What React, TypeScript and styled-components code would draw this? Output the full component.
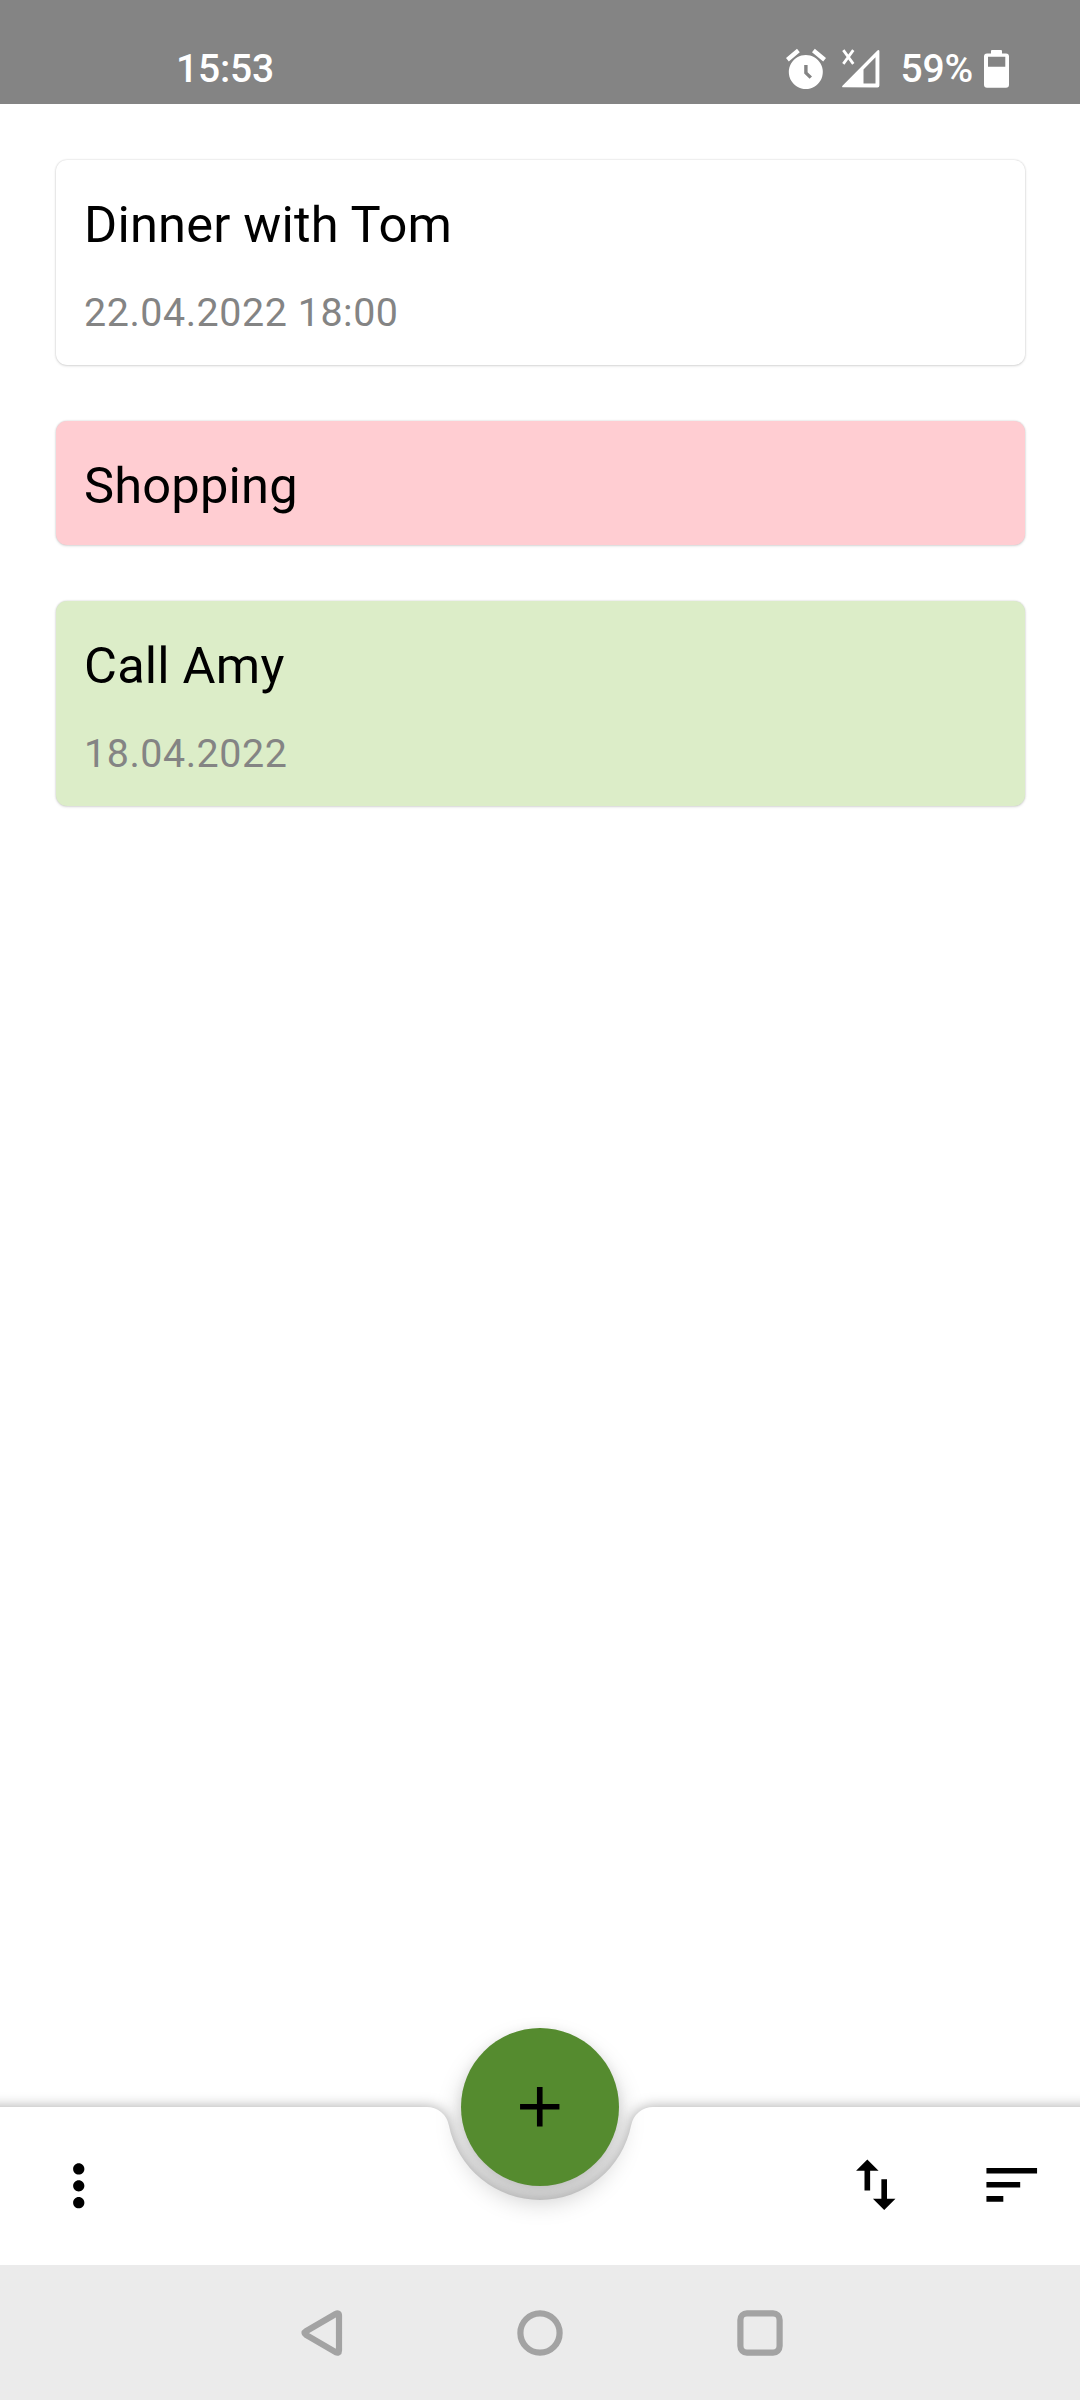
import React from "react";
import styled, { createGlobalStyle } from "styled-components";

const GlobalStyle = createGlobalStyle`
  *, *::before, *::after { box-sizing: border-box; }
  body { margin: 0; background: #fff; font-family: Roboto, sans-serif; }
`;

const Screen = styled.div`
  display: flex;
  flex-direction: column;
  width: 1080px;
  height: 2400px;
  overflow: hidden;
  background: #fff;
`;

const StatusBar = styled.header`
  display: flex;
  flex: none;
  justify-content: space-between;
  height: 104px;
  padding: 45px 70px 0 176px;
  background: #848484;
  color: #fff;
`;

const StatusText = styled.span`
  font-size: 39px;
  font-weight: 500;
  line-height: 48px;
  letter-spacing: -0.2px;
  white-space: nowrap;
`;

const StatusIcons = styled.div`
  display: flex;
  align-items: flex-start;
`;

const Icon = styled.svg`
  display: block;
  flex: none;
`;

const StatusGlyphs = styled(Icon)`
  margin-right: 20px;
`;

const Battery = styled(Icon)`
  margin-left: 11px;
`;

const TaskList = styled.main`
  display: flex;
  flex: 1;
  flex-direction: column;
  gap: 56px;
  padding: 56px 55px 0 56px;
`;

const TaskCard = styled.article<{ $tone: string }>`
  padding: 35px 28px 29.4px;
  border-radius: 11px;
  background: ${(p) => p.$tone};
  box-shadow: 0 0 2px rgba(0, 0, 0, 0.18), 0 1px 3px rgba(0, 0, 0, 0.12);
`;

const TaskTitle = styled.h2`
  margin: 0;
  color: #000;
  font-size: 50.6px;
  font-weight: 400;
  line-height: 59px;
  letter-spacing: 0.2px;
`;

const TaskDate = styled.p`
  margin: 36px 0 0;
  color: #848484;
  font-size: 39.4px;
  line-height: 46px;
  letter-spacing: 0.55px;
`;

const BottomBar = styled.footer`
  position: relative;
  flex: none;
  height: 158px;
`;

const BarShadow = styled.div`
  position: absolute;
  inset: 0 -40px;
  filter: drop-shadow(0 0 7px rgba(0, 0, 0, 0.34));
`;

const BarSurface = styled.div`
  height: 100%;
  background: #fff;
  clip-path: path("M0 0H466.7A22.5 22.5 0 0 1 488.8 18.1A93 93 0 0 0 671.2 18.1A22.5 22.5 0 0 1 693.3 0H1160V158H0Z");
`;

const BarActions = styled.div`
  position: relative;
  display: flex;
  align-items: center;
  height: 100%;
  padding: 0 35px 0 45px;
`;

const IconButton = styled.button<{ $lift?: number }>`
  display: flex;
  margin: 0 0 ${(p) => p.$lift ?? 0}px;
  padding: 0;
  border: 0;
  background: none;
  color: #000;

  & + & {
    margin-left: 68px;
  }
`;

const Spacer = styled.div`
  flex: 1;
`;

const AddButton = styled.button`
  position: absolute;
  top: -79px;
  left: 461px;
  display: grid;
  place-items: center;
  width: 158px;
  height: 158px;
  padding: 0;
  border: 0;
  border-radius: 50%;
  background: #558b2f;
  color: #000;
  box-shadow: 0 14px 26px rgba(0, 0, 0, 0.22), 0 2px 12px rgba(0, 0, 0, 0.07);
`;

const SystemNav = styled.nav`
  position: relative;
  display: flex;
  flex: none;
  align-items: center;
  justify-content: center;
  gap: 172px;
  height: 135px;
  background: #ebebeb;
`;

const tasks = [
  { title: "Dinner with Tom", date: "22.04.2022 18:00", tone: "#fff" },
  { title: "Shopping", tone: "#ffcdd2" },
  { title: "Call Amy", date: "18.04.2022", tone: "#dcedc8" },
];

function ActionIcon({ d }: { d: string }) {
  return (
    <Icon width="67.5" height="67.5" viewBox="0 0 24 24" fill="currentColor">
      <path d={d} />
    </Icon>
  );
}

export default function App() {
  return (
    <>
      <GlobalStyle />
      <Screen>
        <StatusBar>
          <StatusText>15:53</StatusText>
          <StatusIcons>
            <StatusGlyphs width="96" height="46" viewBox="785 45 96 46" fill="#fff">
              <path d="M786 58 797 48.8 799.8 52.2 788.8 61.4ZM812 52.2 814.8 48.8 826 58 823.2 61.4Z" />
              <path
                fillRule="evenodd"
                d="M805.8 55a17 17 0 1 0 0.01 0ZM804.2 65H807.6V72.3L812 76.4 809.6 78.8 804.2 73.6Z"
              />
              <path
                fillRule="evenodd"
                d="M842.5 87.3Q841.5 87 842.5 85.8L877.4 50.4Q879.2 49.2 879.4 51.2V85.6Q879.4 87.5 877.5 87.5ZM863.5 69.5V83.5H875.5V57.3Z"
              />
              <path d="M843.3 50.2 853.3 63.8M853.3 50.2 843.3 63.8" stroke="#fff" strokeWidth="2.8" />
            </StatusGlyphs>
            <StatusText>59%</StatusText>
            <Battery width="26" height="46" viewBox="984 45 26 46" fill="#fff">
              <path
                fillRule="evenodd"
                d="M992 50H1001Q1002 50 1002 51V53.5H1006Q1009 53.5 1009 56.5V84.7Q1009 87.7 1006 87.7H987Q984 87.7 984 84.7V56.5Q984 53.5 987 53.5H991V51Q991 50 992 50ZM988 56.8V66.8H1005.3V56.8Z"
              />
            </Battery>
          </StatusIcons>
        </StatusBar>

        <TaskList>
          {tasks.map((task) => (
            <TaskCard key={task.title} $tone={task.tone}>
              <TaskTitle>{task.title}</TaskTitle>
              {task.date && <TaskDate>{task.date}</TaskDate>}
            </TaskCard>
          ))}
        </TaskList>

        <BottomBar>
          <BarShadow>
            <BarSurface />
          </BarShadow>
          <BarActions>
            <IconButton aria-label="More">
              <ActionIcon d="M12 8c1.1 0 2-.9 2-2s-.9-2-2-2-2 .9-2 2 .9 2 2 2zm0 2c-1.1 0-2 .9-2 2s.9 2 2 2 2-.9 2-2-.9-2-2-2zm0 6c-1.1 0-2 .9-2 2s.9 2 2 2 2-.9 2-2-.9-2-2-2z" />
            </IconButton>
            <Spacer />
            <IconButton aria-label="Swap order" $lift={2}>
              <ActionIcon d="M16 17.01V10h-2v7.01h-3L15 21l4-3.99h-3zM9 3L5 6.99h3V14h2V6.99h3L9 3z" />
            </IconButton>
            <IconButton aria-label="Sort" $lift={2}>
              <ActionIcon d="M3 18h6v-2H3v2zM3 6v2h18V6H3zm0 7h12v-2H3v2z" />
            </IconButton>
          </BarActions>
          <AddButton aria-label="Add">
            <ActionIcon d="M19 13h-6v6h-2v-6H5v-2h6V5h2v6h6v2z" />
          </AddButton>
        </BottomBar>

        <SystemNav>
          <Icon width="48" height="48" viewBox="0 0 48 48" fill="none" stroke="#a3a3a3" strokeWidth="6.2" strokeLinejoin="round">
            <path d="M39.6 5 10 22.2Q7 24 10 25.8L39.6 43.2Q43 44.8 43 41.4V6.6Q43 3.2 39.6 5Z" />
          </Icon>
          <Icon width="48" height="48" viewBox="0 0 48 48" fill="none" stroke="#a3a3a3" strokeWidth="6.2">
            <circle cx="24" cy="24" r="19.6" />
          </Icon>
          <Icon width="48" height="48" viewBox="0 0 48 48" fill="none" stroke="#a3a3a3" strokeWidth="6.2">
            <rect x="4.4" y="4.4" width="39.2" height="39.2" rx="6.5" />
          </Icon>
        </SystemNav>
      </Screen>
    </>
  );
}
